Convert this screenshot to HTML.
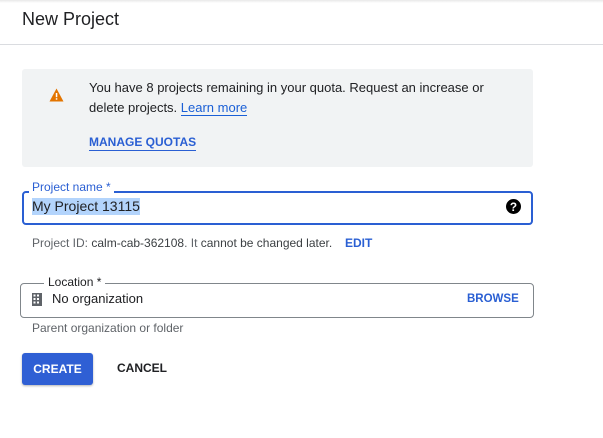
<!DOCTYPE html>
<html><head><style>
body{margin:0;width:603px;height:438px;background:#fff;font-family:"Liberation Sans",sans-serif;color:#202124;position:relative;overflow:hidden}
.a{position:absolute;white-space:nowrap}
</style></head><body>
<div class="a" style="left:0;top:0;width:603px;height:3px;background:linear-gradient(#e8e8e8,#fff)"></div>
<div class="a" style="left:22px;top:8px;font-size:18px;line-height:22px">New Project</div>
<div class="a" style="left:0;top:44px;width:603px;height:1px;background:#dadce0"></div>
<div class="a" style="left:22px;top:69px;width:511px;height:98px;background:#f1f3f4;border-radius:3px"></div>
<svg class="a" style="left:49px;top:88px" width="15" height="14" viewBox="0 0 15 14"><path d="M7.5 0.5L14.5 13.5H0.5Z" fill="#e37400"/><rect x="6.8" y="5" width="1.5" height="4.2" fill="#fff"/><rect x="6.8" y="10.2" width="1.5" height="1.5" fill="#fff"/></svg>
<div class="a" style="left:89px;top:78px;font-size:13px;line-height:20px">You have 8 projects remaining in your quota. Request an increase or<br>delete projects. <span style="color:#1a5fd6;border-bottom:1px solid #1a5fd6">Learn more</span></div>
<div class="a" style="left:89px;top:134px;font-size:12px;line-height:16px;font-weight:bold;color:#2a5fd3;border-bottom:1px solid #2a5fd3">MANAGE QUOTAS</div>
<div class="a" style="left:22px;top:191px;width:507px;height:30px;border:2px solid #2a5fd3;border-radius:4px"></div>
<div class="a" style="left:29px;top:180px;font-size:12px;line-height:14px;color:#2a5fd3;background:#fff;padding:0 3px">Project name *</div>
<div class="a" style="left:32px;top:198px;font-size:14px;line-height:17px;background:#b3d4fc">My Project 13115</div>
<svg class="a" style="left:506px;top:199px" width="15" height="15" viewBox="0 0 14 14"><circle cx="7" cy="7" r="7" fill="#000"/><text x="7" y="11" font-size="11" font-weight="bold" fill="#fff" text-anchor="middle" font-family="Liberation Sans">?</text></svg>
<div class="a" style="left:32px;top:236px;font-size:12px;line-height:14px;color:#5f6368">Project ID: <span style="color:#3c4043">calm-cab-362108</span>. It <span style="color:#3c4043">cannot be changed later.</span></div>
<div class="a" style="left:345px;top:236px;font-size:12px;line-height:14px;color:#2a5fd3;font-weight:bold">EDIT</div>
<div class="a" style="left:20px;top:283px;width:512px;height:33px;border:1px solid #80868b;border-radius:4px"></div>
<div class="a" style="left:44px;top:275px;font-size:12px;line-height:14px;background:#fff;padding:0 4px">Location *</div>
<svg class="a" style="left:32px;top:293px" width="10" height="13" viewBox="0 0 10 13"><rect width="10" height="13" fill="#5f6368"/><g fill="#fff"><rect x="1.5" y="1.5" width="2" height="2"/><rect x="5" y="1.5" width="2" height="2"/><rect x="1.5" y="5" width="2" height="2"/><rect x="5" y="5" width="2" height="2"/><rect x="1.5" y="8.5" width="2" height="2"/><rect x="5" y="8.5" width="2" height="2"/></g></svg>
<div class="a" style="left:52px;top:291px;font-size:13px;line-height:16px">No organization</div>
<div class="a" style="left:467px;top:292px;font-size:11.5px;line-height:15px;color:#2a5fd3;font-weight:bold">BROWSE</div>
<div class="a" style="left:32px;top:321px;font-size:12px;line-height:14px;color:#5f6368">Parent organization or folder</div>
<div class="a" style="left:22px;top:353px;width:71px;height:32px;background:#2f5fd4;border-radius:3px;box-shadow:0 1px 2px rgba(0,0,0,.3);color:#fff;font-size:12px;font-weight:bold;line-height:32px;text-align:center">CREATE</div>
<div class="a" style="left:117px;top:361px;font-size:12px;font-weight:bold;line-height:15px">CANCEL</div>
</body></html>
